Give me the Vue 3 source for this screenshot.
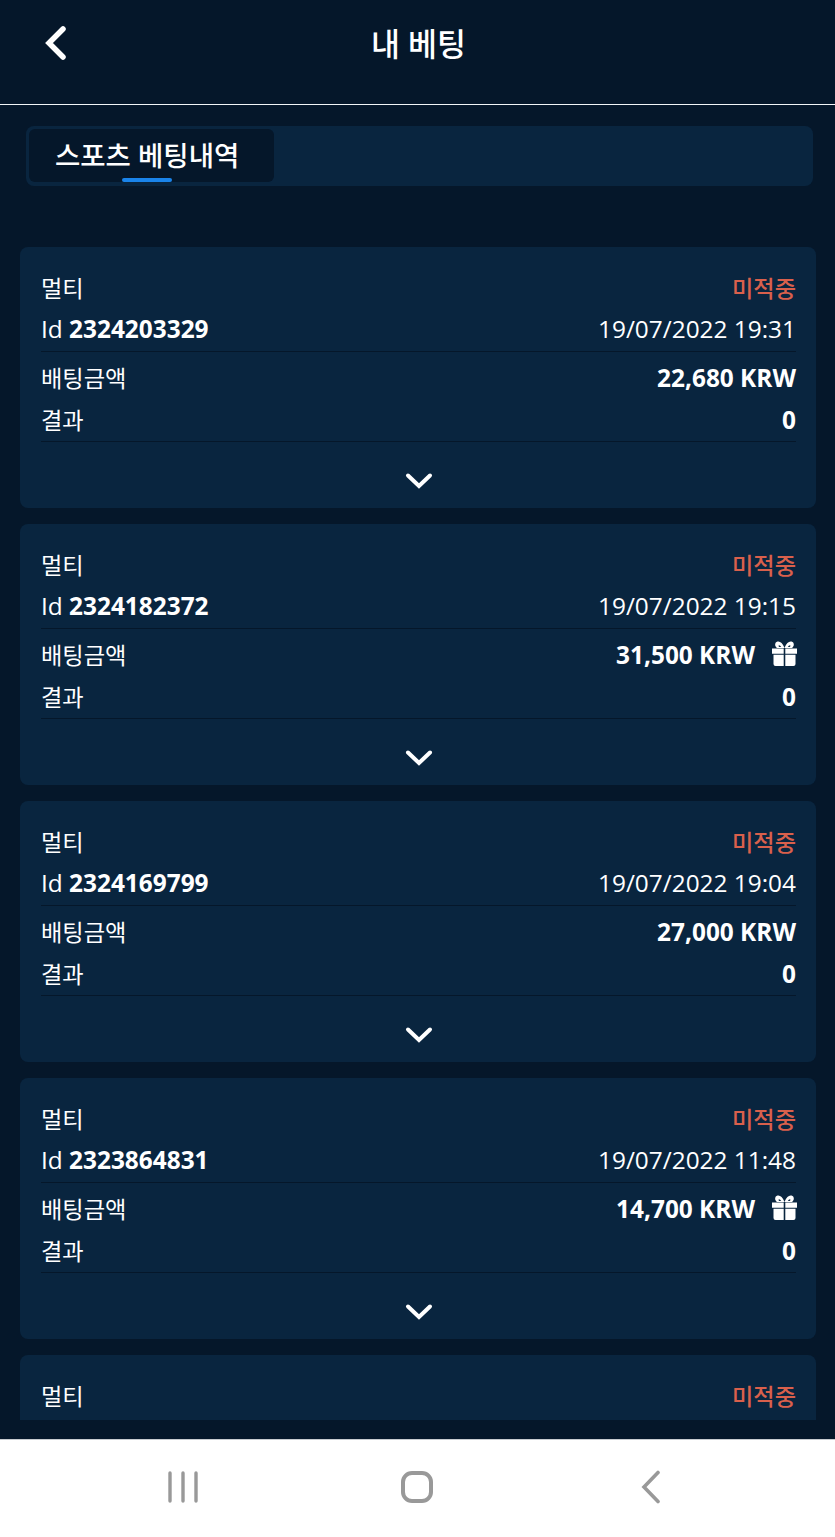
<template>
  <div class="screen">
    <main class="page">
      <header class="top-bar">
        <button type="button" class="top-bar__back" aria-label="back">
          <svg width="24" height="36" viewBox="0 0 24 36">
            <path d="M19 4 5 18l14 14" fill="none" stroke="#fff" stroke-width="5.5" stroke-linecap="round" />
          </svg>
        </button>
        <h1 class="top-bar__title">내 베팅</h1>
      </header>

      <nav class="tabs">
        <div class="tabs__item">
          스포츠 베팅내역
          <span class="tabs__mark" />
        </div>
      </nav>

      <section class="list">
        <article v-for="bet in bets" :key="bet.id" class="card">
          <div class="card__group card__group--head">
            <div class="row">
              <span class="row__label">멀티</span>
              <span class="row__label row__label--status">미적중</span>
            </div>
            <div class="row row--id">
              <span>Id <b>{{ bet.id }}</b></span>
              <span>{{ bet.date }}</span>
            </div>
          </div>
          <div class="card__group card__group--money">
            <div class="row">
              <span class="row__label">배팅금액</span>
              <span class="row__amount">
                <b>{{ bet.amount }} KRW</b>
                <svg v-if="bet.gift" class="row__gift" width="25" height="25" viewBox="0 0 25 25">
                  <path d="M12.500 7C10.500 2 8 0 5.500.6 2.500 1.300 2.500 5.500 5 7ZM12.500 7C14.500 2 17 0 19.500.6 22.500 1.300 22.500 5.500 20 7Z" fill="#fff" />
                  <path d="M7 4.200c.8.2 1.600.8 2.200 1.800H7.400C6.600 5.600 6.300 4.400 7 4.200ZM18 4.200c-.8.2-1.600.8-2.200 1.800h1.800c.8-.4 1.100-1.600.4-1.800Z" fill="#09253f" />
                  <path d="M0 7.500h11.700v5.300H0zM13.300 7.500H25v5.300H13.300zM1.500 13.800h10.200V25H3.500a2 2 0 0 1-2-2zM13.300 13.800h10.200V23a2 2 0 0 1-2 2h-8.200z" fill="#fff" />
                </svg>
              </span>
            </div>
            <div class="row">
              <span class="row__label">결과</span>
              <b>0</b>
            </div>
          </div>
          <button type="button" class="card__toggle" aria-label="expand">
            <svg width="28" height="18" viewBox="0 0 28 18">
              <path d="M3 3.500 14 14 25 3.500" fill="none" stroke="#fff" stroke-width="4" stroke-linecap="round" />
            </svg>
          </button>
        </article>
        <article class="card">
          <div class="row">
            <span class="row__label">멀티</span>
            <span class="row__label row__label--status">미적중</span>
          </div>
        </article>
      </section>
    </main>

    <footer class="system-nav">
      <svg width="32" height="32" viewBox="0 0 32 32">
        <path d="M3 2v28M16 2v28M29 2v28" stroke="#999" stroke-width="3.400" stroke-linecap="round" />
      </svg>
      <svg width="34" height="34" viewBox="0 0 34 34">
        <rect x="3" y="3" width="28" height="28" rx="9" fill="none" stroke="#999" stroke-width="4" />
      </svg>
      <svg width="22" height="34" viewBox="0 0 22 34">
        <path d="M18 2.500 4 17l14 14.500" fill="none" stroke="#999" stroke-width="3.600" stroke-linecap="round" />
      </svg>
    </footer>
  </div>
</template>

<script setup>
const bets = [
  { id: '2324203329', date: '19/07/2022 19:31', amount: '22,680', gift: false },
  { id: '2324182372', date: '19/07/2022 19:15', amount: '31,500', gift: true },
  { id: '2324169799', date: '19/07/2022 19:04', amount: '27,000', gift: false },
  { id: '2323864831', date: '19/07/2022 11:48', amount: '14,700', gift: true },
]
</script>

<style>
html,
body {
  margin: 0;
  background: #fff;
}
</style>

<style scoped>
.screen {
  width: 835px;
  height: 1537px;
  display: flex;
  flex-direction: column;
  overflow: hidden;
  font-family: "Open Sans", "Noto Sans CJK KR", sans-serif;
  font-size: 24.4px;
  color: #fff;
}

.page {
  height: 1439px;
  flex: none;
  display: flex;
  flex-direction: column;
  background: #05172a;
}

.top-bar {
  position: relative;
  height: 105px;
  flex: none;
  box-sizing: border-box;
  display: flex;
  justify-content: center;
  padding: 22px 0 0 2px;
  border-bottom: 1px solid #f2f5f7;
}

.top-bar__back {
  position: absolute;
  left: 44px;
  top: 25px;
  display: flex;
  padding: 0;
  background: none;
  border: none;
}

.top-bar__title {
  margin: 0;
  font-size: 31.5px;
  line-height: 44px;
  font-weight: 500;
}

.tabs {
  flex: none;
  height: 60px;
  box-sizing: border-box;
  margin: 21px 22px 0 26px;
  padding: 3px;
  background: #09253f;
  border-radius: 8px;
}

.tabs__item {
  position: relative;
  width: 245px;
  height: 53px;
  box-sizing: border-box;
  padding-left: 26px;
  font-size: 27.5px;
  line-height: 54px;
  font-weight: 500;
  background: #05172a;
  border-radius: 6px;
}

.tabs__mark {
  position: absolute;
  left: 93px;
  bottom: 0;
  width: 50px;
  height: 4px;
  background: #1a84ea;
  border-radius: 2px;
}

.list {
  flex: none;
  height: 1173px;
  margin: 61px 19px 0 20px;
  display: flex;
  flex-direction: column;
  gap: 16.5px;
  overflow: hidden;
}

.card {
  flex: none;
  height: 260.5px;
  box-sizing: border-box;
  padding: 20px 20px 0 21px;
  background: #09253f;
  border-radius: 8px;
}

.card__group {
  border-bottom: 1px solid #05172a;
}

.card__group--head {
  padding-bottom: 3px;
}

.card__group--money {
  display: flex;
  flex-direction: column;
  gap: 1px;
  padding-top: 5px;
  padding-bottom: 1px;
}

.row {
  height: 41px;
  display: flex;
  align-items: center;
  justify-content: space-between;
  line-height: 41px;
}

.row--id {
  height: 40px;
  line-height: 40px;
  padding-top: 1px;
  box-sizing: border-box;
}

.row b {
  font-weight: 700;
}

.row__label {
  margin-top: 2px;
  font-size: 23.2px;
}

.row__label--status {
  font-weight: 500;
  color: #d9604c;
}

.row__amount {
  display: flex;
  align-items: center;
  gap: 17px;
}

.row__gift {
  flex: none;
  margin: -2px -1px 0 0;
}

.card__toggle {
  display: flex;
  align-items: center;
  justify-content: center;
  width: 100%;
  height: 78px;
  padding: 0;
  background: none;
  border: none;
}

.system-nav {
  flex: 1;
  box-sizing: border-box;
  display: grid;
  grid-template-columns: repeat(3, 1fr);
  justify-items: center;
  align-items: center;
  padding: 0 67px 3px 66px;
  background: #fff;
  border-top: 1px solid #c8ccd0;
}
</style>
